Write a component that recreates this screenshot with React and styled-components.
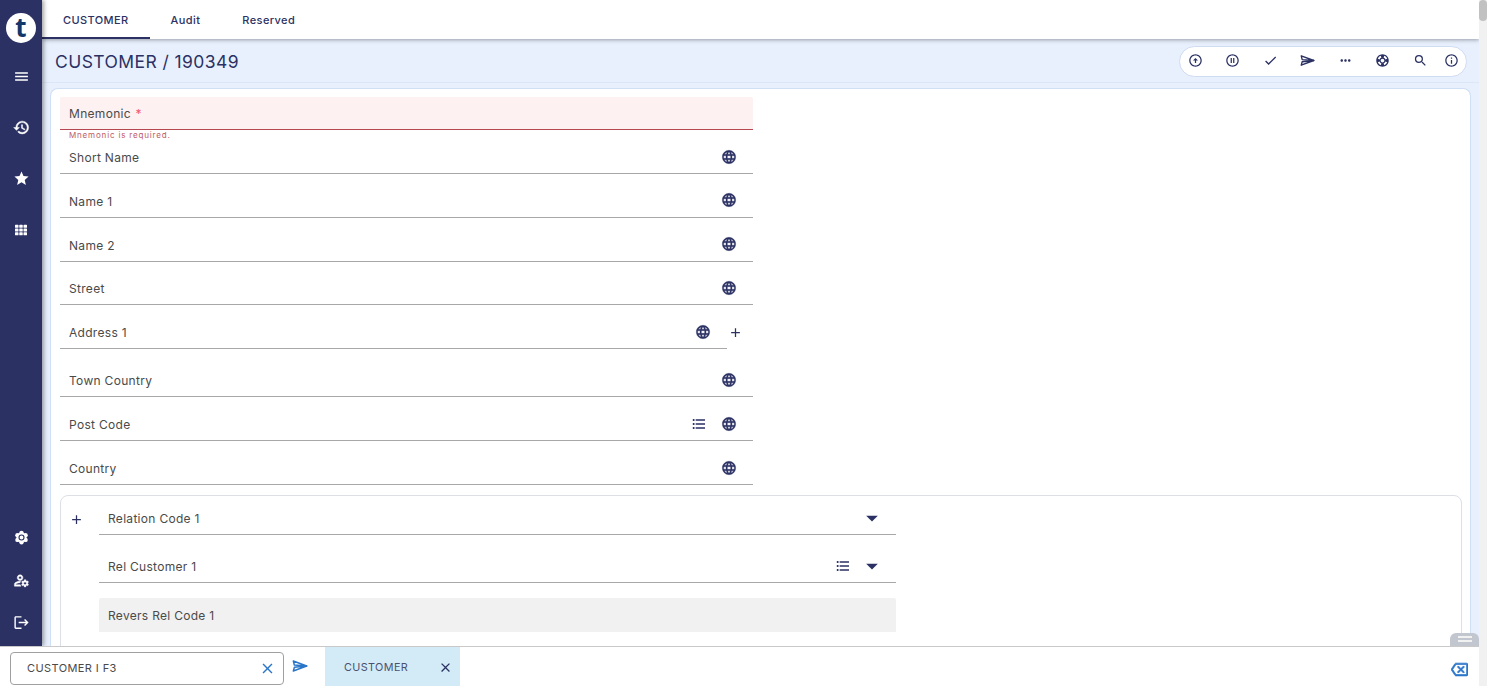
import React from 'react';
import styled, { createGlobalStyle } from 'styled-components';
import {
  MdMenu, MdHistory, MdStar, MdLogout, MdOutlineManageAccounts, MdLanguage, MdAdd,
  MdFormatListBulleted, MdArrowDropDown, MdClose, MdOutlineBackspace, MdCheck, MdSearch,
  MdInfoOutline, MdMoreHoriz, MdOutlinePauseCircle, MdOutlineArrowCircleUp, MdSupport,
} from 'react-icons/md';
import { FaTh } from 'react-icons/fa';

const navy = '#2b3163';

const GlobalStyle = createGlobalStyle`
  html, body { margin: 0; height: 100%; overflow: hidden; background: #fff; }
  body { font-family: Inter, "Liberation Sans", sans-serif; color: #444; }
  svg path[fill='none'] { stroke: none; }
`;

const Shell = styled.div`
  display: flex;
  height: 100vh;
`;

const Main = styled.div`
  flex: 1;
  min-width: 0;
  display: flex;
  flex-direction: column;
  position: relative;
`;

const Scrollbar = styled.div`
  width: 8px;
  background: #f1f1f1;
`;

const Thumb = styled.div`
  height: 21px;
  background: #c1c1c1;
  border-radius: 4px;
`;

const Upper = styled.div`
  flex: 1;
  min-height: 0;
  display: flex;
  overflow: hidden;
`;

const Sidebar = styled.nav`
  width: 42px;
  flex: none;
  background: ${navy};
  box-shadow: 2px 0 4px rgba(0, 0, 0, 0.35);
  display: flex;
  flex-direction: column;
  align-items: center;
  color: #fff;
  position: relative;
  z-index: 3;
`;

const Logo = styled.div`
  width: 30px;
  height: 30px;
  margin-top: 13px;
  margin-bottom: 8px;
  border-radius: 50%;
  background: #fff;
  color: #12386b;
  font: 700 26px/28px "Open Sans", sans-serif;
  text-align: center;
`;

const SideIcon = styled.div`
  height: 51px;
  display: flex;
  align-items: center;
  justify-content: center;
  font-size: ${(p) => p.$size || 17}px;

  svg {
    stroke-width: ${(p) => (p.$bold ? 0.7 : 0)};
    stroke: currentColor;
  }
`;

const SideSpacer = styled.div`
  flex: 1;
`;

const SideBottom = styled.div`
  padding-bottom: 2px;
  display: flex;
  flex-direction: column;
`;

const BottomIcon = styled(SideIcon)`
  height: 42.5px;
`;

const Content = styled.div`
  flex: 1;
  min-width: 0;
  display: flex;
  flex-direction: column;
`;

const Tabs = styled.div`
  height: 39px;
  flex: none;
  display: flex;
  box-shadow: 0 1px 4px rgba(0, 0, 0, 0.35);
  position: relative;
  z-index: 2;
  background: #fff;
`;

const Tab = styled.div`
  height: 39px;
  box-sizing: border-box;
  padding: 3px 21px 0;
  display: flex;
  align-items: center;
  font-size: 11px;
  font-weight: 500;
  letter-spacing: 0.4px;
  color: ${navy};
  border-bottom: 2px solid ${(p) => (p.$active ? navy : 'transparent')};
`;

const Band = styled.div`
  flex: 1;
  min-height: 0;
  background: #e8f0fe;
  display: flex;
  flex-direction: column;
`;

const TitleRow = styled.div`
  height: 44px;
  flex: none;
  box-sizing: border-box;
  padding: 0 12px 0 13px;
  display: flex;
  align-items: center;
  justify-content: space-between;
  border-bottom: 1px solid #dbe6f6;
`;

const Title = styled.h1`
  margin: 2px 0 0;
  font-size: 17.5px;
  font-weight: 400;
  letter-spacing: 0.42px;
  color: ${navy};
`;

const Actions = styled.div`
  width: 288px;
  height: 31px;
  box-sizing: border-box;
  margin-top: 1px;
  padding: 0 7px;
  display: flex;
  align-items: center;
  gap: 21.6px;
  background: #fff;
  border: 1px solid #cfdcf2;
  border-radius: 16px;
  color: ${navy};
  font-size: 15px;
`;

const ActionIcon = styled.span`
  width: 16px;
  flex: none;
  display: flex;
  justify-content: center;
  margin-left: ${(p) => p.$shift || 0}px;
  margin-bottom: 1px;
`;

const Card = styled.div`
  flex: 1;
  min-height: 0;
  margin: 5px 8px 0 8px;
  box-sizing: border-box;
  padding: 8px 8px 0 9px;
  background: #fff;
  border: 1px solid #cfdff6;
  border-bottom: none;
  border-radius: 8px 8px 0 0;
  overflow: hidden;
`;

const Fields = styled.div`
  width: 693px;
`;

const FieldRow = styled.div`
  display: flex;
  align-items: center;
  margin-top: ${(p) => p.$top || 0}px;
`;

const Field = styled.div`
  flex: 1;
  min-width: 0;
  height: ${(p) => p.$height || 34}px;
  box-sizing: border-box;
  padding: ${(p) => p.$pad ?? 2}px ${(p) => p.$right || 16}px 0 9px;
  display: flex;
  align-items: center;
  gap: ${(p) => p.$gap || 14}px;
  font-size: 12px;
  letter-spacing: 0.3px;
  color: #4a4a4a;
  background: ${(p) => p.$bg || 'transparent'};
  border-bottom: 1px solid ${(p) => p.$line || '#a8a8a8'};
  border-radius: ${(p) => (p.$bg ? '2px 2px 0 0' : '0')};
`;

const Label = styled.span`
  flex: 1;
`;

const Required = styled.span`
  color: #f0556e;
  margin-left: 1px;
`;

const ErrorText = styled.div`
  height: 9px;
  padding-left: 9px;
  padding-top: 1px;
  font-size: 8px;
  line-height: 9px;
  letter-spacing: 0.83px;
  color: #bf5a64;
`;

const FieldIcon = styled.span`
  display: flex;
  margin-top: -2px;
  color: ${navy};
  font-size: ${(p) => p.$size || 16}px;
`;

const Globe = styled(MdLanguage)`
  stroke: currentColor;
  stroke-width: 0.5;
`;

const AddSlot = styled.span`
  width: 26px;
  flex: none;
  box-sizing: border-box;
  padding-left: 1px;
  display: flex;
  color: ${navy};
  font-size: 15px;
`;

const Relation = styled.section`
  width: 1402px;
  box-sizing: border-box;
  margin-top: 10px;
  padding: 5px 0 0 8px;
  height: 170px;
  display: grid;
  grid-template-columns: 30px 797px;
  grid-auto-rows: min-content;
  border: 1px solid #dcdfe6;
  border-radius: 8px 8px 0 0;
`;

const RelAdd = styled.span`
  display: flex;
  align-items: center;
  box-sizing: border-box;
  padding-top: 2px;
  color: ${navy};
  font-size: 15px;
  height: 34px;
`;

const RelCell = styled.div`
  grid-column: 2;
  margin-top: ${(p) => p.$top || 0}px;
`;

const RelField = styled(Field)`
  border-bottom: ${(p) => (p.$plain ? 'none' : '1px solid #a8a8a8')};
`;

const Handle = styled.div`
  position: absolute;
  right: 0;
  bottom: 40px;
  width: 29px;
  height: 13px;
  box-sizing: border-box;
  padding-top: 3px;
  background: #c2c7cf;
  border-radius: 6px 6px 0 0;
  display: flex;
  justify-content: center;
  z-index: 4;

  &::after {
    content: '';
    width: 14px;
    height: 2px;
    border-top: 2px solid #f1f1f1;
    border-bottom: 2px solid #f1f1f1;
  }
`;

const Bottom = styled.footer`
  height: 40px;
  flex: none;
  display: flex;
  align-items: stretch;
  background: #fff;
  border-top: 1px solid #c9c9c9;
  box-sizing: border-box;
  position: relative;
  z-index: 5;
`;

const Search = styled.div`
  width: 274px;
  height: 33px;
  box-sizing: border-box;
  margin: 5px 0 0 10px;
  padding: 0 7px 1px 16px;
  display: flex;
  align-items: center;
  justify-content: space-between;
  border: 1px solid #a0a0a0;
  border-radius: 4px;
  font-size: 11px;
  letter-spacing: 0.4px;
  color: #4a4a4a;
`;

const BlueIcon = styled.span`
  display: flex;
  color: #2a76c9;
  font-size: ${(p) => p.$size || 16}px;
`;

const SendSlot = styled.span`
  width: 41px;
  box-sizing: border-box;
  display: flex;
  align-items: center;
  padding: 0 0 1px 8px;
`;

const OpenTab = styled.div`
  width: 135px;
  box-sizing: border-box;
  padding: 1px 7px 0 19px;
  display: flex;
  align-items: center;
  justify-content: space-between;
  background: #d2ebf6;
  font-size: 10.8px;
  letter-spacing: 0.4px;
  color: #4a5170;
`;

const TabClose = styled.span`
  display: flex;
  color: ${navy};
  font-size: 15px;
`;

const BottomEnd = styled.div`
  flex: 1;
  display: flex;
  align-items: center;
  justify-content: flex-end;
  padding: 6px 11px 0 0;

  svg {
    stroke: currentColor;
    stroke-width: 1;
  }
`;

const plainFields = ['Short Name', 'Name 1', 'Name 2', 'Street'];

// outlined paper plane used in the toolbar and next to the search box
const PlaneIcon = () => (
  <svg width="1em" height="1em" viewBox="0 0 24 24" fill="none" stroke="currentColor" strokeWidth="2.2" strokeLinejoin="round">
    <path d="M2 4.5 22 12 3.5 10.5Z" />
    <path d="M3.5 14 22 12 2 19.5Z" />
  </svg>
);

const GearIcon = () => (
  <svg width="1em" height="1em" viewBox="0 0 24 24">
    <g fill="currentColor">
      <circle cx="12" cy="12" r="8" />
      <circle cx="12" cy="4.5" r="3.5" />
      <circle cx="12" cy="19.5" r="3.5" />
      <circle cx="5.5" cy="8.2" r="3.5" />
      <circle cx="18.5" cy="8.2" r="3.5" />
      <circle cx="5.5" cy="15.8" r="3.5" />
      <circle cx="18.5" cy="15.8" r="3.5" />
    </g>
    <circle cx="12" cy="12" r="4" fill="none" stroke={navy} strokeWidth="1.8" />
  </svg>
);

export default function App() {
  return (
    <Shell>
      <GlobalStyle />
      <Main>
        <Upper>
          <Sidebar>
            <Logo>t</Logo>
            <SideIcon><MdMenu /></SideIcon>
            <SideIcon $bold><MdHistory /></SideIcon>
            <SideIcon><MdStar /></SideIcon>
            <SideIcon $size={12}><FaTh /></SideIcon>
            <SideSpacer />
            <SideBottom>
              <BottomIcon $size={15}><GearIcon /></BottomIcon>
              <BottomIcon $bold><MdOutlineManageAccounts /></BottomIcon>
              <BottomIcon><MdLogout /></BottomIcon>
            </SideBottom>
          </Sidebar>
          <Content>
            <Tabs>
              <Tab $active>CUSTOMER</Tab>
              <Tab>Audit</Tab>
              <Tab>Reserved</Tab>
            </Tabs>
            <Band>
              <TitleRow>
                <Title>CUSTOMER / 190349</Title>
                <Actions>
                  <ActionIcon><MdOutlineArrowCircleUp /></ActionIcon>
                  <ActionIcon><MdOutlinePauseCircle /></ActionIcon>
                  <ActionIcon><MdCheck /></ActionIcon>
                  <ActionIcon><PlaneIcon /></ActionIcon>
                  <ActionIcon><MdMoreHoriz /></ActionIcon>
                  <ActionIcon><MdSupport /></ActionIcon>
                  <ActionIcon><MdSearch /></ActionIcon>
                  <ActionIcon $shift={-6.6}><MdInfoOutline /></ActionIcon>
                </Actions>
              </TitleRow>
              <Card>
                <Fields>
                  <Field $height={33} $pad={0} $bg="#fdf1f1" $line="#b5474f">
                    <Label>Mnemonic <Required>*</Required></Label>
                  </Field>
                  <ErrorText>Mnemonic is required.</ErrorText>
                  {plainFields.map((name, i) => (
                    <FieldRow key={name} $top={i ? 9.75 : 0}>
                      <Field>
                        <Label>{name}</Label>
                        <FieldIcon><Globe /></FieldIcon>
                      </Field>
                    </FieldRow>
                  ))}
                  <FieldRow $top={9.75}>
                    <Field>
                      <Label>Address 1</Label>
                      <FieldIcon><Globe /></FieldIcon>
                    </Field>
                    <AddSlot><MdAdd /></AddSlot>
                  </FieldRow>
                  <FieldRow $top={14}>
                    <Field>
                      <Label>Town Country</Label>
                      <FieldIcon><Globe /></FieldIcon>
                    </Field>
                  </FieldRow>
                  <FieldRow $top={10}>
                    <Field>
                      <Label>Post Code</Label>
                      <FieldIcon><MdFormatListBulleted /></FieldIcon>
                      <FieldIcon><Globe /></FieldIcon>
                    </Field>
                  </FieldRow>
                  <FieldRow $top={10}>
                    <Field>
                      <Label>Country</Label>
                      <FieldIcon><Globe /></FieldIcon>
                    </Field>
                  </FieldRow>
                </Fields>
                <Relation>
                  <RelAdd><MdAdd /></RelAdd>
                  <RelCell>
                    <RelField $right={10} $gap={7}>
                      <Label>Relation Code 1</Label>
                      <FieldIcon $size={28}><MdArrowDropDown /></FieldIcon>
                    </RelField>
                  </RelCell>
                  <RelCell $top={14}>
                    <RelField $right={10} $gap={7}>
                      <Label>Rel Customer 1</Label>
                      <FieldIcon><MdFormatListBulleted /></FieldIcon>
                      <FieldIcon $size={28}><MdArrowDropDown /></FieldIcon>
                    </RelField>
                  </RelCell>
                  <RelCell $top={15}>
                    <RelField $bg="#f1f1f1" $plain $pad={0}>
                      <Label>Revers Rel Code 1</Label>
                    </RelField>
                  </RelCell>
                </Relation>
              </Card>
            </Band>
          </Content>
        </Upper>
        <Handle />
        <Bottom>
          <Search>
            CUSTOMER I F3
            <BlueIcon $size={17}><MdClose /></BlueIcon>
          </Search>
          <SendSlot><BlueIcon><PlaneIcon /></BlueIcon></SendSlot>
          <OpenTab>
            CUSTOMER
            <TabClose><MdClose /></TabClose>
          </OpenTab>
          <BottomEnd><BlueIcon $size={17}><MdOutlineBackspace /></BlueIcon></BottomEnd>
        </Bottom>
      </Main>
      <Scrollbar><Thumb /></Scrollbar>
    </Shell>
  );
}
